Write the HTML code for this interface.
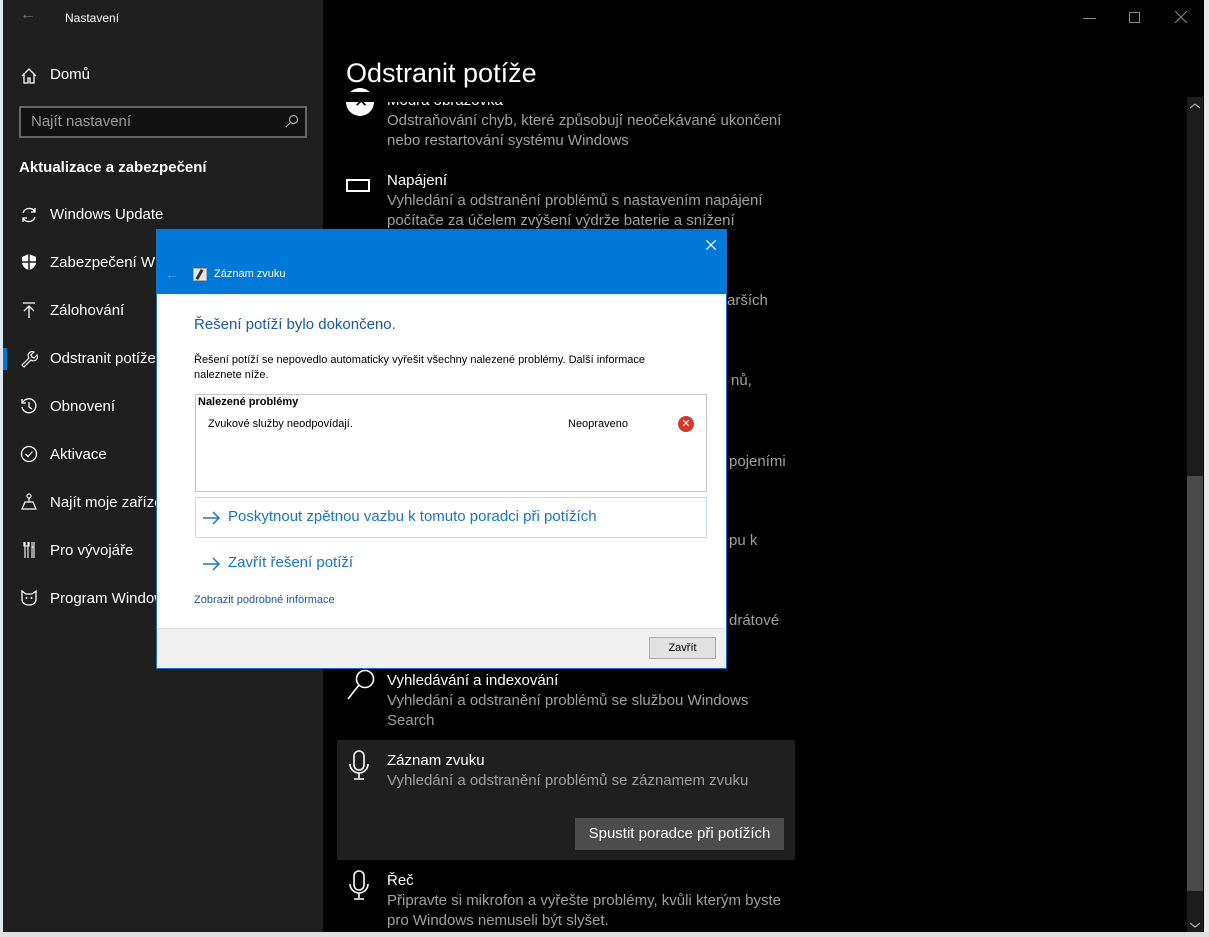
<!DOCTYPE html>
<html><head><meta charset="utf-8"><style>
*{margin:0;padding:0;box-sizing:border-box}
body{width:1209px;height:937px;overflow:hidden;background:#e8e8e8;font-family:"Liberation Sans","DejaVu Sans",sans-serif;position:relative}
.a{position:absolute;white-space:nowrap}
#side{left:3px;top:0;width:320px;height:932px;background:#1f1f1f}
#main{left:323px;top:0;width:881px;height:932px;background:#000}
.si{position:absolute;left:47px;color:#fff;font-size:15px}
.ic{position:absolute;left:16px;width:20px;height:20px}
.t{color:#fff;font-size:15px}
.d{color:#a0a0a0;font-size:15px;line-height:20px}
#dlg{left:156px;top:229px;width:571px;height:440px;background:#fff;border:1px solid #1a6fc0}
</style></head><body>
<div class="a" style="left:0;top:0;width:3px;height:937px;background:#dfe6ee"></div>
<div id="side" class="a">
 <div class="a" style="left:17px;top:6px;color:#777;font-size:16px">←</div>
 <div class="a" style="left:62px;top:11px;color:#fff;font-size:12px">Nastavení</div>
 <svg class="ic" style="top:66px" viewBox="0 0 20 20"><path d="M3 10L10 3l7 7M5 8v9h4v-5h2v5h4V8" fill="none" stroke="#fff" stroke-width="1.3"/></svg>
 <div class="si" style="top:66px">Domů</div>
 <div class="a" style="left:16px;top:106px;width:288px;height:32px;border:2px solid #666;background:#121212"></div>
 <div class="a" style="left:28px;top:113px;color:#9a9a9a;font-size:15px">Najít nastavení</div>
 <svg class="a" style="left:282px;top:114px" width="14" height="14" viewBox="0 0 14 14"><circle cx="8.5" cy="5.5" r="4" fill="none" stroke="#aaa" stroke-width="1.2"/><path d="M5.5 8.5L1 13" stroke="#aaa" stroke-width="1.2"/></svg>
 <div class="a" style="left:16px;top:159px;color:#fff;font-size:15px;font-weight:bold">Aktualizace a zabezpečení</div>
 <svg class="ic" style="top:205px" viewBox="0 0 20 20"><path d="M4 8a6.5 6.5 0 0 1 12-1M16 12a6.5 6.5 0 0 1-12 1M16 3v4h-4M4 17v-4h4" fill="none" stroke="#fff" stroke-width="1.3"/></svg>
 <div class="si" style="top:206px">Windows Update</div>
 <svg class="ic" style="top:252px" viewBox="0 0 20 20"><path d="M10 2l7 3v5c0 4-3 7-7 8-4-1-7-4-7-8V5z" fill="#fff"/><path d="M10 2v16M3 10h14" stroke="#1f1f1f" stroke-width="1.5"/></svg>
 <div class="si" style="top:254px">Zabezpečení Windows</div>
 <svg class="ic" style="top:300px" viewBox="0 0 20 20"><path d="M4 3h12M10 18V6M5 11l5-5 5 5" fill="none" stroke="#fff" stroke-width="1.3"/></svg>
 <div class="si" style="top:302px">Zálohování</div>
 <div class="a" style="left:0;top:348px;width:4px;height:22px;background:#0078d7"></div>
 <svg class="ic" style="top:348px" viewBox="0 0 20 20"><path d="M3 17l7-7a4 4 0 0 1 5-6l-3 3 1 2 2 1 3-3a4 4 0 0 1-6 5l-7 7z" fill="none" stroke="#fff" stroke-width="1.2"/></svg>
 <div class="si" style="top:350px">Odstranit potíže</div>
 <svg class="ic" style="top:396px" viewBox="0 0 20 20"><path d="M4 6a7 7 0 1 1-1 5M3 3v4h4M10 6v5l3 2" fill="none" stroke="#fff" stroke-width="1.3"/></svg>
 <div class="si" style="top:398px">Obnovení</div>
 <svg class="ic" style="top:444px" viewBox="0 0 20 20"><circle cx="10" cy="10" r="7.5" fill="none" stroke="#fff" stroke-width="1.3"/><path d="M6.5 10l2.5 2.5 4.5-5" fill="none" stroke="#fff" stroke-width="1.3"/></svg>
 <div class="si" style="top:446px">Aktivace</div>
 <svg class="ic" style="top:492px" viewBox="0 0 20 20"><circle cx="10" cy="4" r="2" fill="none" stroke="#fff" stroke-width="1.2"/><path d="M10 6v4M6 10h8l3 7H3zM3 17h14" fill="none" stroke="#fff" stroke-width="1.2"/></svg>
 <div class="si" style="top:494px">Najít moje zařízení</div>
 <svg class="ic" style="top:540px" viewBox="0 0 20 20"><path d="M6 2v16M9 2v16M5 2v4h5V2M13 2v16M15 2v16M13 7h2" fill="none" stroke="#fff" stroke-width="1.1"/></svg>
 <div class="si" style="top:542px">Pro vývojáře</div>
 <svg class="ic" style="top:588px" viewBox="0 0 20 20"><path d="M3 3l4 3h6l4-3v8c0 4-3 6-7 6s-7-2-7-6z" fill="none" stroke="#fff" stroke-width="1.3"/><circle cx="7.5" cy="10" r="1" fill="#fff"/><circle cx="12.5" cy="10" r="1" fill="#fff"/></svg>
 <div class="si" style="top:590px">Program Windows Insider</div>
</div>
<div id="main" class="a">
 <div class="a" style="left:760px;top:18px;width:13px;height:1px;background:#888"></div>
 <div class="a" style="left:806px;top:12px;width:11px;height:11px;border:1px solid #888"></div>
 <svg class="a" style="left:852px;top:11px" width="12" height="12" viewBox="0 0 12 12"><path d="M0 0L12 12M12 0L0 12" stroke="#888" stroke-width="1"/></svg>
 <div class="a" style="left:23px;top:58px;color:#fff;font-size:27px">Odstranit potíže</div>
 <div class="a" style="left:0;top:92px;width:860px;height:10px;background:#000;z-index:2"></div>
 <div class="a" style="left:23px;top:88px;width:28px;height:28px;border-radius:50%;background:#fff"></div>
 <div class="a" style="left:31px;top:92px;color:#000;font-size:17px;font-weight:bold">✕</div>
 <div class="a t" style="left:64px;top:92px">Modrá obrazovka</div>
 <div class="a d" style="left:64px;top:111px">Odstraňování chyb, které způsobují neočekávané ukončení<br>nebo restartování systému Windows</div>
 <div class="a" style="left:23px;top:179px;width:24px;height:13px;border:2px solid #fff"></div>
 <div class="a t" style="left:64px;top:172px">Napájení</div>
 <div class="a d" style="left:64px;top:191px">Vyhledání a odstranění problémů s nastavením napájení<br>počítače za účelem zvýšení výdrže baterie a snížení</div>
 <div class="a d" style="left:404px;top:291px">arších</div>
 <div class="a d" style="left:408px;top:371px">nů,</div>
 <div class="a d" style="left:406px;top:452px">pojeními</div>
 <div class="a d" style="left:406px;top:531px">pu k</div>
 <div class="a d" style="left:406px;top:611px">drátové</div>
 <svg class="a" style="left:22px;top:668px" width="34" height="34" viewBox="0 0 34 34"><circle cx="20" cy="11" r="8.5" fill="none" stroke="#fff" stroke-width="1.6"/><path d="M14 17L3 31" stroke="#fff" stroke-width="1.6"/></svg>
 <div class="a t" style="left:64px;top:672px">Vyhledávání a indexování</div>
 <div class="a d" style="left:64px;top:691px">Vyhledání a odstranění problémů se službou Windows<br>Search</div>
 <div class="a" style="left:14px;top:740px;width:458px;height:120px;background:#1f1f1f"></div>
 <svg class="a" style="left:24px;top:750px" width="24" height="32" viewBox="0 0 24 32"><rect x="7" y="1" width="10" height="19" rx="5" fill="none" stroke="#fff" stroke-width="1.6"/><path d="M3 14a9 9 0 0 0 18 0M12 23v5M7 29h10" fill="none" stroke="#fff" stroke-width="1.6"/></svg>
 <div class="a t" style="left:64px;top:752px">Záznam zvuku</div>
 <div class="a d" style="left:64px;top:771px">Vyhledání a odstranění problémů se záznamem zvuku</div>
 <div class="a" style="left:252px;top:818px;width:209px;height:32px;background:#4c4c4c;color:#fff;font-size:15px;text-align:center;line-height:32px">Spustit poradce při potížích</div>
 <svg class="a" style="left:24px;top:870px" width="24" height="32" viewBox="0 0 24 32"><rect x="7" y="1" width="10" height="19" rx="5" fill="none" stroke="#fff" stroke-width="1.6"/><path d="M3 14a9 9 0 0 0 18 0M12 23v5M7 29h10" fill="none" stroke="#fff" stroke-width="1.6"/></svg>
 <div class="a t" style="left:64px;top:872px">Řeč</div>
 <div class="a d" style="left:64px;top:891px">Připravte si mikrofon a vyřešte problémy, kvůli kterým byste<br>pro Windows nemuseli být slyšet.</div>
 <div class="a" style="left:864px;top:97px;width:16px;height:835px;background:#1c1c1c"></div>
 <div class="a" style="left:864px;top:476px;width:16px;height:415px;background:#4a4a4a"></div>
 <svg class="a" style="left:867px;top:103px" width="10" height="6" viewBox="0 0 10 6"><path d="M0 5L5 1l5 4" fill="none" stroke="#ccc"/></svg>
 <svg class="a" style="left:867px;top:922px" width="10" height="6" viewBox="0 0 10 6"><path d="M0 1l5 4 5-4" fill="none" stroke="#ccc"/></svg>
</div>
<div class="a" style="left:0;top:932px;width:1209px;height:5px;background:#e0e0e0"></div>
<div id="dlg" class="a">
 <div class="a" style="left:0;top:0;width:569px;height:64px;background:#0078d7"></div>
 <svg class="a" style="left:549px;top:10px" width="10" height="10" viewBox="0 0 10 10"><path d="M0 0L10 10M10 0L0 10" stroke="#fff" stroke-width="1.2"/></svg>
 <div class="a" style="left:8px;top:36px;color:#4a9be0;font-size:14px">←</div>
 <div class="a" style="left:36px;top:38px;width:14px;height:13px;background:#e8e8e8;border:1px solid #aaa"></div>
 <div class="a" style="left:41px;top:39px;width:3px;height:11px;background:#333;transform:rotate(30deg)"></div>
 <div class="a" style="left:57px;top:38px;color:#fff;font-size:11px">Záznam zvuku</div>
 <div class="a" style="left:37px;top:86px;color:#1c57a5;font-size:15px">Řešení potíží bylo dokončeno.</div>
 <div class="a" style="left:37px;top:123px;color:#000;font-size:11px;line-height:15px">Řešení potíží se nepovedlo automaticky vyřešit všechny nalezené problémy. Další informace<br>naleznete níže.</div>
 <div class="a" style="left:38px;top:164px;width:512px;height:98px;border:1px solid #c8c8c8"></div>
 <div class="a" style="left:41px;top:166px;color:#000;font-size:11px;font-weight:bold">Nalezené problémy</div>
 <div class="a" style="left:51px;top:188px;color:#000;font-size:11px">Zvukové služby neodpovídají.</div>
 <div class="a" style="left:411px;top:188px;color:#000;font-size:11px">Neopraveno</div>
 <div class="a" style="left:521px;top:186px;width:16px;height:16px;border-radius:50%;background:#d9362b;color:#fff;font-size:11px;font-weight:bold;text-align:center;line-height:16px">✕</div>
 <div class="a" style="left:38px;top:267px;width:512px;height:41px;border:1px solid #c4dcf0"></div>
 <svg class="a" style="left:46px;top:281px" width="18" height="14" viewBox="0 0 18 14"><path d="M0 7h16M10 1l6 6-6 6" fill="none" stroke="#1a73c9" stroke-width="1.5"/></svg>
 <div class="a" style="left:71px;top:278px;color:#1a73c9;font-size:15px">Poskytnout zpětnou vazbu k tomuto poradci při potížích</div>
 <svg class="a" style="left:46px;top:327px" width="18" height="14" viewBox="0 0 18 14"><path d="M0 7h16M10 1l6 6-6 6" fill="none" stroke="#1a73c9" stroke-width="1.5"/></svg>
 <div class="a" style="left:71px;top:324px;color:#1a73c9;font-size:15px">Zavřít řešení potíží</div>
 <div class="a" style="left:37px;top:364px;color:#1c57a5;font-size:11px">Zobrazit podrobné informace</div>
 <div class="a" style="left:0;top:398px;width:569px;height:40px;background:#f0f0f0;border-top:1px solid #dfdfdf"></div>
 <div class="a" style="left:492px;top:407px;width:67px;height:22px;background:#e1e1e1;border:1px solid #adadad;font-size:11px;text-align:center;line-height:20px;color:#000">Zavřít</div>
</div>
</body></html>
